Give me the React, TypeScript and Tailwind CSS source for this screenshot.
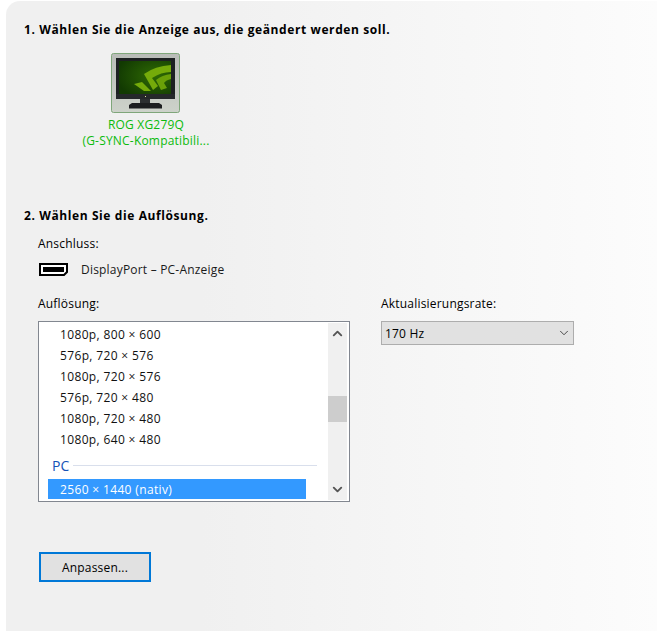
import { ChevronDown } from "lucide-react";

const modes = [
  "1080p, 800 × 600",
  "576p, 720 × 576",
  "1080p, 720 × 576",
  "576p, 720 × 480",
  "1080p, 720 × 480",
  "1080p, 640 × 480",
];

const MonitorIcon = () => (
  <svg width="70" height="61" viewBox="0 0 70 61">
    <defs>
      <linearGradient id="tile" x1="0" y1="0" x2="0" y2="1">
        <stop offset="0" stopColor="#b9bcb8" />
        <stop offset="1" stopColor="#cdd2ca" />
      </linearGradient>
      <radialGradient id="screen" cx="0.7" cy="0.45" r="0.75">
        <stop offset="0" stopColor="#2f6a04" />
        <stop offset="1" stopColor="#123a02" />
      </radialGradient>
    </defs>
    <rect x="0.5" y="0.5" width="68" height="59" rx="2" fill="url(#tile)" stroke="#7fa67a" />
    <rect x="5" y="5" width="59" height="41" fill="#1d2022" />
    <rect x="8" y="8" width="52" height="33" fill="url(#screen)" />
    <path d="M33 21 Q44 13 60 12 V19 Q50 19 41 25 L47 33 L42 37 Z" fill="#75ab0a" />
    <path d="M45 27 Q51 22 60 21 V26 Q55 27 53 30 L56 35 L50 37 Z" fill="#6aa008" />
    <path d="M23 31 L31 29 L40 38 L33 38 Z" fill="#75ab0a" />
    <rect x="5" y="41" width="59" height="5" fill="#25282a" />
    <rect x="34" y="43" width="1" height="1" fill="#e6e6a0" />
    <rect x="29" y="46" width="10" height="4" fill="#2c2f31" />
    <path d="M21 50 H48 L51 52 V55.5 H18 V52 Z" fill="#1c1e20" />
  </svg>
);

const App = () => {
  return (
    <div className="h-[631px] w-[657px] overflow-hidden bg-white pl-[6px] pt-px font-['Open_Sans','Noto_Sans',sans-serif] text-[12px] leading-4 tracking-[0.2px] text-black">
      <div className="h-[630px] rounded-tl-[14px] bg-gradient-to-r from-[#f0f0f0] from-30% to-[#fcfcfc] pl-[18px] pt-[21px]">
        <h2 className="font-bold tracking-[0.6px]">1. Wählen Sie die Anzeige aus, die geändert werden soll.</h2>
        <div className="ml-[58px] mt-[15px] flex w-[128px] flex-col items-center">
          <MonitorIcon />
          <p className="mt-[3px] whitespace-nowrap text-center leading-4 text-[#0cbb0c]">ROG XG279Q</p>
          <p className="whitespace-nowrap text-center leading-4 text-[#0cbb0c]">(G-SYNC-Kompatibili...</p>
        </div>

        <h2 className="mt-[59px] font-bold tracking-[0.6px]">2. Wählen Sie die Auflösung.</h2>
        <div className="ml-[14px] mt-3">
          <p>Anschluss:</p>
          <div className="mt-[9px] flex h-4 items-center">
            <svg width="30" height="13" viewBox="0 0 30 13" className="ml-px">
              <path d="M1 1 H28 V9 L25 12 H1 Z" fill="#fff" stroke="#000" strokeWidth="2" />
              <rect x="4" y="4" width="21" height="5" fill="#000" />
            </svg>
            <span className="ml-[12px] mt-[2px] text-[#1a1a1a]">DisplayPort – PC-Anzeige</span>
          </div>
          <div className="mt-[19px] flex">
            <div className="w-[343px]">
              <p>Auflösung:</p>
              <div className="mt-[9px] flex h-[181px] w-[312px] border border-[#828790] bg-white p-px">
                <div className="flex-1 overflow-hidden pl-[8px]">
                  <div className="pt-px">
                    {modes.map((mode) => (
                      <div key={mode} className="flex h-[21px] items-center pl-[12px] tracking-[0.35px] text-[#111]">
                        {mode}
                      </div>
                    ))}
                  </div>
                  <div className="mt-[5px] flex h-[21px] items-center pl-1 pr-[11px] text-[14px] text-[#1553b6]">
                    <span>PC</span>
                    <div className="ml-[3px] h-px flex-1 bg-[#d9dfec]" />
                  </div>
                  <div className="mr-[22px] mt-[3px] flex h-5 items-center bg-[#3399ff] pl-[12px] pt-px tracking-[0.35px] text-white">
                    2560 × 1440 (nativ)
                  </div>
                </div>
                <div className="mr-px flex w-[19px] flex-col bg-[#f0f0f0]">
                  <div className="flex h-[19px] items-center justify-center pt-px">
                    <ChevronDown size={15} strokeWidth={3} className="rotate-180 text-[#555]" />
                  </div>
                  <div className="mt-[54px] h-[26px] bg-[#cdcdcd]" />
                  <div className="mt-auto flex h-[19px] items-center justify-center pb-[3px]">
                    <ChevronDown size={15} strokeWidth={3} className="text-[#555]" />
                  </div>
                </div>
              </div>
            </div>
            <div>
              <p>Aktualisierungsrate:</p>
              <div className="mt-[9px] flex h-6 w-[193px] items-center justify-between border border-[#adadad] bg-[#e1e1e1] pl-[3px] pr-[2px]">
                <span className="pt-[2px]">170 Hz</span>
                <ChevronDown size={14} strokeWidth={1.5} className="text-[#333]" />
              </div>
            </div>
          </div>
          <button className="ml-px mt-[50px] h-[30px] w-28 border-2 border-[#0078d7] bg-[#e1e1e1] pt-px text-center">
            Anpassen...
          </button>
        </div>
      </div>
    </div>
  );
};

export default App;
